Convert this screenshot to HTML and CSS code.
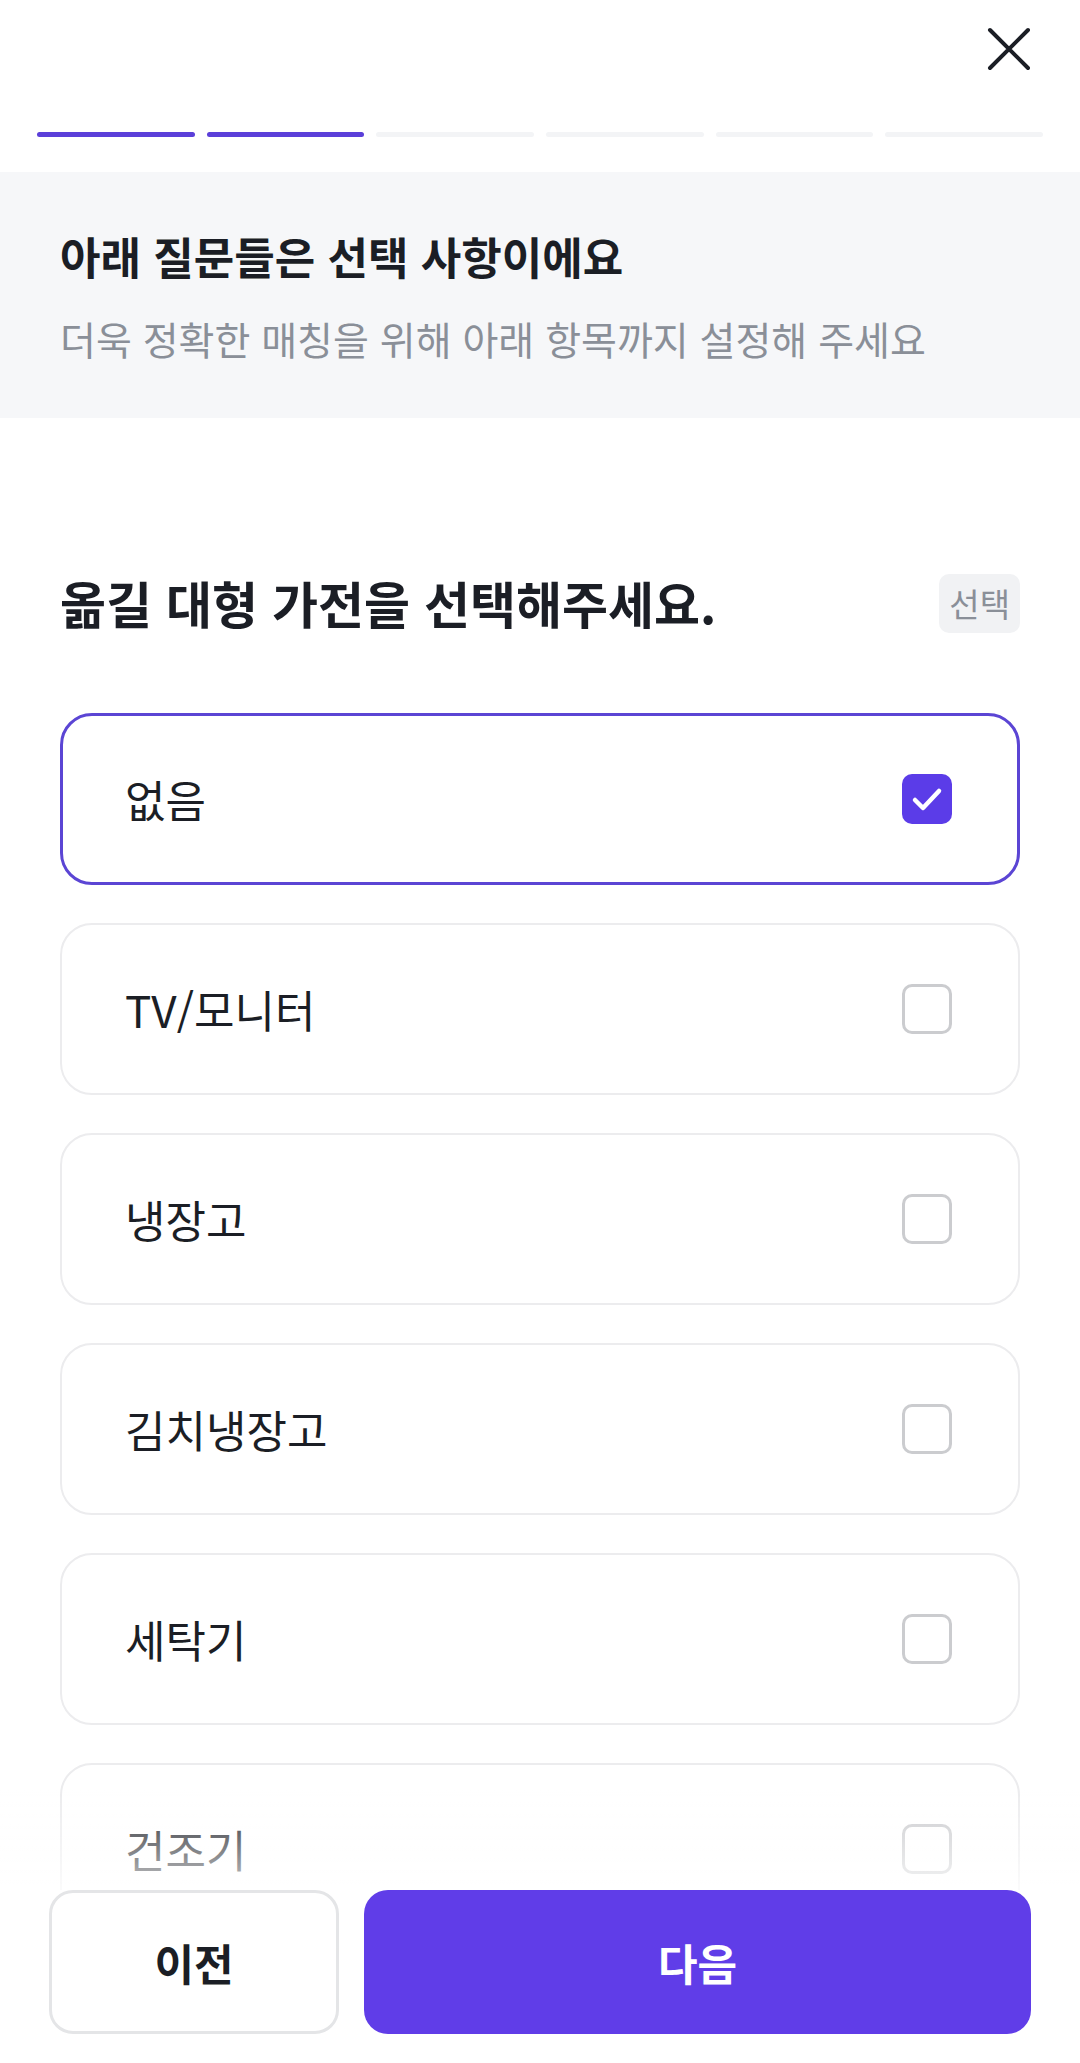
FILE: index.html
```html
<!DOCTYPE html>
<html lang="ko">
<head>
<meta charset="utf-8">
<title>대형 가전 선택</title>
<link rel="stylesheet" href="styles.css">
</head>
<body>
<div class="screen">
  <header class="topbar">
    <button class="close" aria-label="닫기">
      <svg width="44" height="44" viewBox="0 0 44 44"><path d="M3 3 L41 41 M41 3 L3 41" stroke="#1b1e25" stroke-width="4" stroke-linecap="round" fill="none"/></svg>
    </button>
  </header>
  <div class="progress">
    <span class="seg on"></span><span class="seg on"></span><span class="seg"></span><span class="seg"></span><span class="seg"></span><span class="seg"></span>
  </div>
  <section class="notice">
    <h1 class="notice-title">아래 질문들은 선택 사항이에요</h1>
    <p class="notice-sub">더욱 정확한 매칭을 위해 아래 항목까지 설정해 주세요</p>
  </section>
  <section class="question">
    <div class="q-head">
      <h2 class="q-title">옮길 대형 가전을 선택해주세요.</h2>
      <span class="badge">선택</span>
    </div>
    <ul class="options">
      <li class="option selected"><span class="label">없음</span><span class="check on"><svg width="50" height="50" viewBox="0 0 50 50"><path d="M13 26 L21 34 L37 17" stroke="#fff" stroke-width="4.5" stroke-linecap="round" stroke-linejoin="round" fill="none"/></svg></span></li>
      <li class="option"><span class="label">TV/모니터</span><span class="check"></span></li>
      <li class="option"><span class="label">냉장고</span><span class="check"></span></li>
      <li class="option"><span class="label">김치냉장고</span><span class="check"></span></li>
      <li class="option"><span class="label">세탁기</span><span class="check"></span></li>
      <li class="option"><span class="label">건조기</span><span class="check"></span></li>
    </ul>
  </section>
  <footer class="actions">
    <button class="btn prev">이전</button>
    <button class="btn next">다음</button>
  </footer>
</div>
</body>
</html>
```
FILE: styles.css
```css
* { box-sizing: border-box; }
html, body { margin: 0; padding: 0; background: #fff; }
body {
  font-family: "Noto Sans CJK KR", "Noto Sans", sans-serif;
  color: #1b1e25;
}
.screen {
  height: 100vh;
  overflow: hidden;
  display: flex;
  flex-direction: column;
}
.topbar {
  height: 98px;
  display: flex;
  justify-content: flex-end;
  align-items: center;
  padding-right: 49px;
  flex-shrink: 0;
}
.close {
  border: 0;
  background: none;
  padding: 0;
  width: 44px;
  height: 44px;
  display: block;
}
.close svg { display: block; }
.progress {
  display: flex;
  gap: 12px;
  padding: 0 37px;
  margin-top: 34px;
  flex-shrink: 0;
}
.seg {
  flex: 1;
  height: 5px;
  border-radius: 3px;
  background: #f3f4f6;
}
.seg.on { background: #5b3fd9; }
.notice {
  margin-top: 35px;
  background: #f6f7f9;
  padding: 56px 60px 55px;
  flex-shrink: 0;
}
.notice-title {
  margin: 0;
  font-size: 44px;
  line-height: 56px;
  font-weight: 700;
  color: #1b1e25;
}
.notice-sub {
  margin: 29px 0 0;
  font-size: 39px;
  line-height: 50px;
  font-weight: 400;
  color: #8a8f98;
}
.question {
  padding: 152px 60px 0;
}
.q-head {
  display: flex;
  justify-content: space-between;
  align-items: center;
  height: 64px;
}
.q-title {
  margin: 0;
  font-size: 50px;
  line-height: 64px;
  font-weight: 700;
  color: #1b1e25;
}
.badge {
  background: #f1f2f4;
  color: #8a8f98;
  font-size: 33px;
  line-height: 59px;
  height: 59px;
  padding: 0 10px;
  border-radius: 10px;
  margin-top: 2px;
}
.options {
  list-style: none;
  margin: 79px 0 0;
  padding: 0;
  display: flex;
  flex-direction: column;
  gap: 38px;
}
.option {
  height: 172px;
  border: 2px solid #ececee;
  border-radius: 32px;
  display: flex;
  align-items: center;
  justify-content: space-between;
  padding: 0 66px 0 63px;
  flex-shrink: 0;
}
.option.selected { border: 3px solid #5b45d4; padding: 0 65px 0 62px; }
.label {
  font-size: 44px;
  line-height: 56px;
  color: #1b1e25;
}
.check {
  width: 50px;
  height: 50px;
  border: 3px solid #cbcccf;
  border-radius: 10px;
  background: #fff;
  flex-shrink: 0;
}
.check.on {
  border: 0;
  background: #5b3ce8;
}
.check svg { display: block; }
.actions {
  position: fixed;
  left: 0;
  right: 0;
  bottom: 0;
  display: flex;
  gap: 25px;
  padding: 0 49px 29px;
  background: #fff;
}
.actions::before {
  content: "";
  position: absolute;
  left: 0;
  right: 0;
  top: -100px;
  height: 100px;
  background: linear-gradient(rgba(255,255,255,0), rgba(255,255,255,0.75));
  pointer-events: none;
}
.btn {
  height: 144px;
  border-radius: 24px;
  font-family: "Noto Sans CJK KR", "Noto Sans", sans-serif;
  font-size: 43px;
  font-weight: 700;
}
.btn.prev {
  width: 290px;
  background: #fff;
  border: 3px solid #e4e5e7;
  color: #1b1e25;
}
.btn.next {
  flex: 1;
  background: #603de8;
  border: 0;
  color: #fff;
}
```
